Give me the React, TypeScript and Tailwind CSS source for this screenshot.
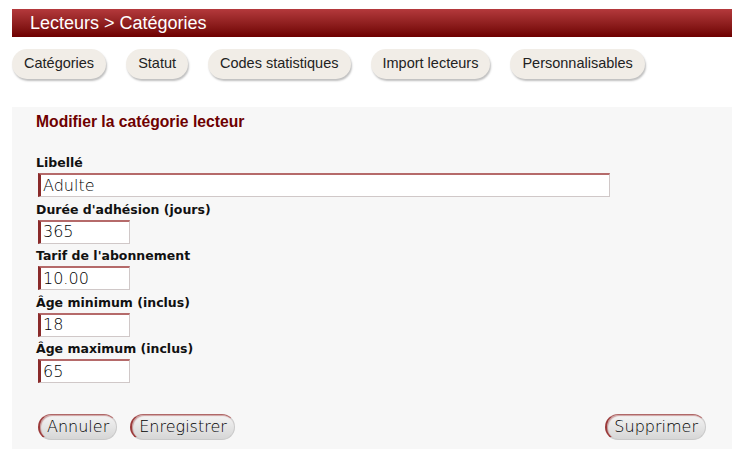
const tabs = ['Catégories', 'Statut', 'Codes statistiques', 'Import lecteurs', 'Personnalisables'];

const fields = [
  { label: 'Libellé', value: 'Adulte', wide: true },
  { label: "Durée d'adhésion (jours)", value: '365' },
  { label: "Tarif de l'abonnement", value: '10.00' },
  { label: 'Âge minimum (inclus)', value: '18' },
  { label: 'Âge maximum (inclus)', value: '65' },
];

function PillButton({ children }: { children: string }) {
  return (
    <button className="h-[26px] px-[7px] rounded-full border border-[#c9c9c9] border-l-2 border-l-[#9b3a3a] border-t-[#b06868] bg-gradient-to-b from-[#f4f4f4] to-[#d6d6d6] text-[16px] font-extralight text-black leading-none shadow-[inset_1px_1px_1px_rgba(150,40,40,0.4)] [font-family:'DejaVu_Sans',sans-serif]">
      {children}
    </button>
  );
}

export default function App() {
  return (
    <div className="w-[744px] h-[470px] bg-white pt-[9px] px-[12px] [font-family:'Liberation_Sans',Arial,sans-serif]">
      <div className="h-[28px] bg-gradient-to-b from-[#b4393c] to-[#6e0000] flex items-center pl-[18px]">
        <h1 className="text-white text-[18px] leading-none">Lecteurs &gt; Catégories</h1>
      </div>

      <nav className="flex gap-[20px] mt-[12px]">
        {tabs.map((t) => (
          <span
            key={t}
            className="h-[30px] px-[12px] flex items-center rounded-full bg-[#f1ede7] text-[14.5px] text-[#222] shadow-[1px_2px_2px_rgba(0,0,0,0.25)]"
          >
            {t}
          </span>
        ))}
      </nav>

      <section className="mt-[28px] h-[342px] bg-[#f7f7f7] px-[24px] pt-[6px]">
        <h2 className="text-[#6e0000] text-[15.7px] font-bold leading-[18px] mb-[24px]">Modifier la catégorie lecteur</h2>
        <div className="flex flex-col">
          {fields.map((f) => (
            <label key={f.label} className="flex flex-col">
              <span className="text-[12.5px] font-bold text-[#111] leading-[16px] [font-family:'DejaVu_Sans',sans-serif]">{f.label}</span>
              <input
                readOnly
                value={f.value}
                className={`${f.wide ? 'w-[572px]' : 'w-[92px]'} h-[24px] ml-[2px] mt-[2px] mb-[4.5px] bg-white border border-[#d0c8c8] border-l-[3px] border-l-[#8a2a2a] border-t-2 border-t-[#b56a6a] pl-[2px] text-[16px] font-extralight text-black outline-none [font-family:'DejaVu_Sans',sans-serif]`}
              />
            </label>
          ))}
        </div>
        <div className="flex mt-[26px] ml-[2px] mr-[2px]">
          <div className="flex gap-[13px]">
            <PillButton>Annuler</PillButton>
            <PillButton>Enregistrer</PillButton>
          </div>
          <div className="ml-auto">
            <PillButton>Supprimer</PillButton>
          </div>
        </div>
      </section>
    </div>
  );
}
